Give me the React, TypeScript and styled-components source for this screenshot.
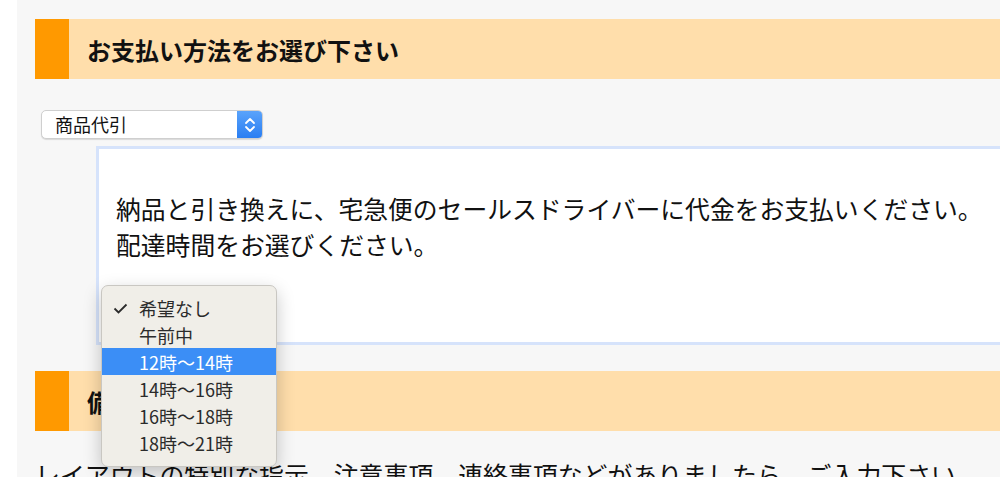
import styled, { createGlobalStyle } from "styled-components";

const GlobalStyle = createGlobalStyle`
    html, body {
        margin: 0;
        padding: 0;
        background: #ffffff;
        overflow: hidden;
    }
    body {
        font-family: "Noto Sans CJK JP", "Noto Sans", sans-serif;
        color: #111111;
    }
`;

const Page = styled.div`
    margin-left: 17px;
    min-height: 477px;
    background: #f7f7f7;
    padding: 19px 0 0 18px;
    overflow: hidden;
`;

const SectionHeader = styled.div`
    display: flex;
    height: 60px;
    background: #ffdeab;
`;

const Marker = styled.div`
    width: 34px;
    flex-shrink: 0;
    background: #ff9900;
`;

const HeaderTitle = styled.h2`
    margin: 0;
    padding-left: 18px;
    display: flex;
    align-items: center;
    font-size: 24px;
    font-weight: 700;
    color: #111111;
`;

const PaymentSelect = styled.div`
    margin: 31px 0 0 6px;
    width: 222px;
    height: 29px;
    box-sizing: border-box;
    display: flex;
    align-items: stretch;
    background: #ffffff;
    border: 1px solid #cfcfcf;
    border-radius: 5px;
    box-shadow: 0 1px 1px rgba(0, 0, 0, 0.12);
    overflow: hidden;
`;

const SelectValue = styled.span`
    flex: 1;
    padding-left: 13px;
    font-size: 18px;
    line-height: 27px;
    color: #111111;
`;

const Stepper = styled.span`
    width: 25px;
    display: flex;
    align-items: center;
    justify-content: center;
    background: linear-gradient(#5aa3fb, #2a7ef2);
`;

const InfoBox = styled.div`
    position: relative;
    margin: 7px -40px 0 61px;
    border: 3px solid #d6e3fb;
    background: #ffffff;
    padding: 41px 17px 80px;
`;

const InfoText = styled.p`
    margin: 0;
    font-size: 24.8px;
    line-height: 36px;
    white-space: nowrap;
`;

const TimeMenu = styled.ul`
    position: absolute;
    left: 2px;
    top: 136px;
    z-index: 2;
    width: 176px;
    box-sizing: border-box;
    margin: 0;
    padding: 8px 0 10px;
    list-style: none;
    background: #f0eee8;
    border: 1px solid #c9c7c2;
    border-radius: 7px;
    box-shadow: 0 6px 18px rgba(0, 0, 0, 0.22);
`;

const TimeOption = styled.li<{ $active?: boolean }>`
    position: relative;
    height: 27px;
    padding-left: 37px;
    display: flex;
    align-items: center;
    font-size: 18px;
    color: ${(p) => (p.$active ? "#ffffff" : "#2b2b2b")};
    background: ${(p) => (p.$active ? "#3b8ef6" : "transparent")};
`;

const Check = styled.svg`
    position: absolute;
    left: 11px;
    top: 9px;
`;

const Section2 = styled(SectionHeader)`
    margin-top: 26px;
`;

const Note = styled.p`
    margin: 25px 0 0;
    font-size: 24.9px;
    line-height: 36px;
    white-space: nowrap;
`;

const times = ["希望なし", "午前中", "12時〜14時", "14時〜16時", "16時〜18時", "18時〜21時"];

const App = () => {
    return (
        <>
            <GlobalStyle />
            <Page>
                <SectionHeader>
                    <Marker />
                    <HeaderTitle>お支払い方法をお選び下さい</HeaderTitle>
                </SectionHeader>
                <PaymentSelect>
                    <SelectValue>商品代引</SelectValue>
                    <Stepper>
                        <svg width="12" height="18" viewBox="0 0 12 18">
                            <path
                                d="M2 7 L6 3 L10 7 M2 11 L6 15 L10 11"
                                fill="none"
                                stroke="#ffffff"
                                strokeWidth="1.8"
                                strokeLinecap="round"
                                strokeLinejoin="round"
                            />
                        </svg>
                    </Stepper>
                </PaymentSelect>
                <InfoBox>
                    <InfoText>
                        納品と引き換えに、宅急便のセールスドライバーに代金をお支払いください。
                        <br />
                        配達時間をお選びください。
                    </InfoText>
                    <TimeMenu>
                        {times.map((t, i) => (
                            <TimeOption key={t} $active={i === 2}>
                                {i === 0 && (
                                    <Check width="15" height="11" viewBox="0 0 15 11">
                                        <path
                                            d="M1.5 5.5 L5.5 9.5 L13.5 1.5"
                                            fill="none"
                                            stroke="#2b2b2b"
                                            strokeWidth="1.8"
                                        />
                                    </Check>
                                )}
                                {t}
                            </TimeOption>
                        ))}
                    </TimeMenu>
                </InfoBox>
                <Section2>
                    <Marker />
                    <HeaderTitle>備考</HeaderTitle>
                </Section2>
                <Note>
                    レイアウトの特別な指示、注意事項、連絡事項などがありましたら、ご入力下さい。
                </Note>
            </Page>
        </>
    );
};

export default App;
